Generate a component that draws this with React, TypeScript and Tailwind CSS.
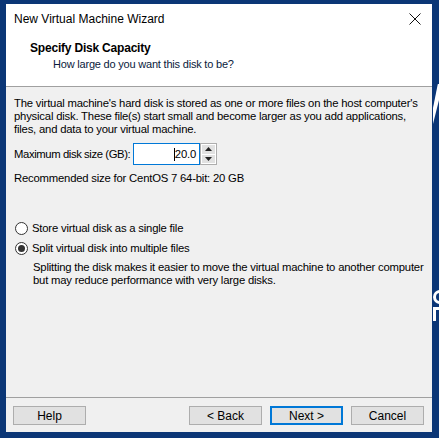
import React from 'react';

const font = { fontFamily: '"Liberation Sans", Arial, sans-serif' };

function Radio({ checked }: { checked?: boolean }) {
  return (
    <span className="relative flex h-[13px] w-[13px] shrink-0 items-center justify-center rounded-full border border-[#333333] bg-white">
      {checked && <span className="h-[7px] w-[7px] rounded-full bg-[#333333]" />}
    </span>
  );
}

function WizButton({ label, primary }: { label: string; primary?: boolean }) {
  return (
    <button
      className={
        'flex h-[19px] w-[73px] items-center justify-center bg-[#e1e1e1] text-[12px] text-black ' +
        (primary ? 'border-2 border-[#0078d7]' : 'border border-[#adadad]')
      }
    >
      {label}
    </button>
  );
}

export default function App() {
  return (
    <div className="relative h-[438px] w-[439px] overflow-hidden bg-[#0b3676] pl-[6px] pt-[4px]" style={font}>
      {/* wallpaper bits peeking out on the right */}
      <div className="absolute left-[433px] top-[84px] h-[40px] w-[8px] bg-white" style={{ clipPath: 'polygon(60% 0, 100% 0, 100% 20%, 0 100%, 0 60%)' }} />
      <div className="absolute left-[433px] top-[290px] h-[14px] w-[8px] rounded-l-full border-[3px] border-r-0 border-white" />
      <div className="absolute left-[433px] top-[307px] h-[14px] w-[8px] border-l-[3px] border-t-[3px] border-white" />

      <div className="flex h-[428px] w-[426px] flex-col bg-[#f0f0f0]">
        {/* white top: title bar + page header */}
        <div className="flex h-[82px] flex-col bg-white">
          <div className="flex h-[30px] items-center justify-between pl-[8px] pr-[10px]">
            <span className="text-[12px] text-black">New Virtual Machine Wizard</span>
            <svg width="12" height="12" viewBox="0 0 12 12" className="mr-[1px]">
              <path d="M0.5 0.5 L11.5 11.5 M11.5 0.5 L0.5 11.5" stroke="#111" strokeWidth="1" />
            </svg>
          </div>
          <div className="pl-[24px] pt-[7px] text-[12px] font-bold leading-[14px] tracking-[-0.2px] text-black">Specify Disk Capacity</div>
          <div className="pl-[47px] pt-[2px] text-[11px] leading-[14px] tracking-[-0.2px] text-[#0a1a3c]">How large do you want this disk to be?</div>
        </div>
        <div className="h-px bg-[#a0a0a0]" />

        {/* body */}
        <div className="flex flex-1 flex-col whitespace-nowrap px-[8px] pt-[10px] text-[11.3px] leading-[13px] tracking-[-0.2px] text-black">
          <p>
            The virtual machine's hard disk is stored as one or more files on the host computer's
            <br />
            physical disk. These file(s) start small and become larger as you add applications,
            <br />
            files, and data to your virtual machine.
          </p>

          <div className="mt-[7px] flex items-center">
            <span className="w-[119px] shrink-0 tracking-[-0.4px]">Maximum disk size (GB):</span>
            <div className="flex h-[22px] w-[67px] shrink-0 items-center justify-end border border-[#0078d7] bg-white pr-[3px]">
              <span className="h-[13px] w-px bg-black" />
              <span>20.0</span>
            </div>
            <div className="flex h-[22px] w-[17px] shrink-0 flex-col gap-px border border-[#adadad] bg-white p-px">
              <div className="flex flex-1 items-center justify-center bg-[#e1e1e1]">
                <svg width="7" height="4" viewBox="0 0 7 4"><path d="M3.5 0 L7 4 L0 4 Z" fill="#222" /></svg>
              </div>
              <div className="flex flex-1 items-center justify-center bg-[#e1e1e1]">
                <svg width="7" height="4" viewBox="0 0 7 4"><path d="M0 0 L7 0 L3.5 4 Z" fill="#222" /></svg>
              </div>
            </div>
          </div>

          <div className="mt-[7px]">Recommended size for CentOS 7 64-bit: 20 GB</div>

          <div className="mt-[37px] flex items-center gap-[4px] pl-px">
            <Radio />
            <span>Store virtual disk as a single file</span>
          </div>
          <div className="mt-[7px] flex items-center gap-[4px] pl-px">
            <Radio checked />
            <span>Split virtual disk into multiple files</span>
          </div>
          <p className="mt-[6px] pl-[19px]">
            Splitting the disk makes it easier to move the virtual machine to another computer
            <br />
            but may reduce performance with very large disks.
          </p>
        </div>

        {/* footer */}
        <div className="h-px bg-[#a0a0a0]" />
        <div className="flex h-[34px] items-start pl-[7px] pr-[8px] pt-[8px]">
          <WizButton label="Help" />
          <div className="flex-1" />
          <div className="flex gap-[8px]">
            <WizButton label="< Back" />
            <WizButton label="Next >" primary />
            <WizButton label="Cancel" />
          </div>
        </div>
      </div>
    </div>
  );
}
